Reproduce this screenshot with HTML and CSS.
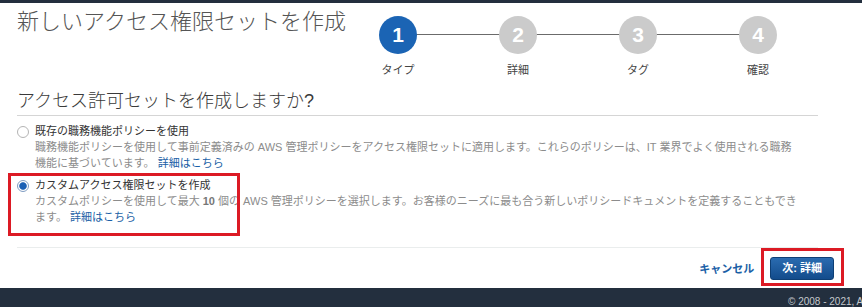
FILE: index.html
```html
<!DOCTYPE html>
<html lang="ja">
<head>
<meta charset="utf-8">
<title>新しいアクセス権限セットを作成</title>
<link rel="stylesheet" href="styles.css">
</head>
<body>
<div class="topbar"></div>
<main class="page">
  <div class="header">
    <h1 class="title">新しいアクセス権限セットを作成</h1>
    <ol class="stepper">
      <li class="step active"><span class="num">1</span><span class="step-label">タイプ</span></li>
      <li class="step"><span class="num">2</span><span class="step-label">詳細</span></li>
      <li class="step"><span class="num">3</span><span class="step-label">タグ</span></li>
      <li class="step"><span class="num">4</span><span class="step-label">確認</span></li>
    </ol>
  </div>
  <section class="question">
    <h2 class="q-title">アクセス許可セットを作成しますか?</h2>
    <div class="options">
      <div class="option">
        <span class="radio"></span>
        <div class="opt-text">
          <div class="opt-label">既存の職務機能ポリシーを使用</div>
          <div class="opt-desc">職務機能ポリシーを使用して事前定義済みの AWS 管理ポリシーをアクセス権限セットに適用します。これらのポリシーは、IT 業界でよく使用される職務<br>機能に基づいています。 <a class="link" href="#">詳細はこちら</a></div>
        </div>
      </div>
      <div class="option selected">
        <span class="radio checked"></span>
        <div class="opt-text">
          <div class="opt-label">カスタムアクセス権限セットを作成</div>
          <div class="opt-desc">カスタムポリシーを使用して最大 <b>10</b> 個の AWS 管理ポリシーを選択します。お客様のニーズに最も合う新しいポリシードキュメントを定義することもでき<br>ます。 <a class="link" href="#">詳細はこちら</a></div>
        </div>
        <span class="annot annot-option"></span>
      </div>
    </div>
  </section>
  <div class="actions">
    <a class="cancel" href="#">キャンセル</a>
    <button class="next" type="button">次: 詳細<span class="annot annot-button"></span></button>
  </div>
</main>
<footer class="footer"><span class="copy">© 2008 - 2021, Amazon Web Services, Inc. またはその関連会社。無断転用禁止。</span></footer>
</body>
</html>
```
FILE: styles.css
```css
html, body {
  margin: 0;
  padding: 0;
}
body {
  width: 862px;
  height: 307px;
  overflow: hidden;
  display: flex;
  flex-direction: column;
  background: #ffffff;
  font-family: "Liberation Sans", "Noto Sans CJK JP", sans-serif;
  color: #333333;
}
.topbar {
  height: 3px;
  background: #232f3e;
  flex: 0 0 auto;
}
.page {
  flex: 1 1 auto;
  padding: 0 28px 0 17px;
  display: flex;
  flex-direction: column;
}
.header {
  display: flex;
  align-items: flex-start;
  margin-right: 16px;
  padding-top: 6px;
}
.title {
  flex: 1 1 auto;
  min-width: 0;
  margin: 0;
  white-space: nowrap;
  font-size: 22px;
  line-height: 26px;
  font-weight: 300;
  color: #555555;
}
.stepper {
  flex: 0 0 auto;
  display: flex;
  list-style: none;
  margin: 7px 0 0 0;
  padding: 0;
}
.step {
  position: relative;
  width: 120px;
  display: flex;
  flex-direction: column;
  align-items: center;
}
.step + .step::before {
  content: "";
  position: absolute;
  top: 18px;
  left: -60px;
  width: 120px;
  height: 1px;
  background: #6b6b6b;
}
.num {
  position: relative;
  z-index: 1;
  width: 38px;
  height: 38px;
  border-radius: 50%;
  background: #cbcbcb;
  color: #ffffff;
  font-weight: bold;
  font-size: 21px;
  line-height: 38px;
  text-align: center;
}
.step.active .num {
  background: #1b64b4;
}
.step-label {
  margin-top: 9px;
  font-size: 11px;
  line-height: 14px;
  color: #444444;
}
.question {
  margin-right: 16px;
  border-bottom: 1px solid #eaeded;
}
.q-title {
  margin: 13px 0 0 0;
  padding-bottom: 3px;
  border-bottom: 1px solid #d5d5d5;
  font-size: 18px;
  line-height: 22px;
  font-weight: 300;
  color: #3a3a3a;
}
.options {
  padding: 7px 0 22px 0;
}
.option {
  position: relative;
  display: flex;
  align-items: flex-start;
  gap: 6px;
}
.option + .option {
  margin-top: 6px;
}
.radio {
  flex: 0 0 auto;
  box-sizing: border-box;
  width: 12px;
  height: 12px;
  margin-top: 3px;
  border-radius: 50%;
  border: 1px solid #b4b4b4;
  background: #ffffff;
}
.radio.checked {
  border-color: #7f9cc2;
  background: radial-gradient(circle, #1a5fb4 0, #1a5fb4 3.3px, #ffffff 4.2px);
}
.opt-text {
  font-size: 11px;
  line-height: 16px;
}
.opt-label {
  color: #333333;
}
.opt-desc {
  color: #8c8c8c;
}
.opt-desc b {
  color: #777777;
}
.link {
  color: #1b5fa6;
  text-decoration: none;
}
.annot {
  position: absolute;
  box-sizing: border-box;
  border: 3px solid #dc1a24;
  pointer-events: none;
}
.annot-option {
  left: -9px;
  top: -4px;
  width: 232px;
  height: 63px;
}
.actions {
  flex: 1 1 auto;
  display: flex;
  align-items: center;
  justify-content: flex-end;
  gap: 16px;
}
.cancel {
  font-size: 11px;
  font-weight: bold;
  color: #1b5fa6;
  text-decoration: none;
}
.next {
  position: relative;
  height: 23px;
  padding: 0 11px;
  border: 1px solid #0e3f75;
  border-radius: 3px;
  background: linear-gradient(#2a6bb0, #134c8c);
  color: #ffffff;
  font-family: "Liberation Sans", "Noto Sans CJK JP", sans-serif;
  font-size: 11px;
  font-weight: bold;
  line-height: 21px;
}
.annot-button {
  left: -10px;
  top: -10px;
  width: 83px;
  height: 38px;
}
.footer {
  flex: 0 0 19px;
  height: 19px;
  background: #232f3e;
  overflow: hidden;
  white-space: nowrap;
  padding-left: 788px;
  box-sizing: border-box;
}
.copy {
  display: block;
  padding-top: 8px;
  font-size: 10px;
  line-height: 12px;
  color: #c4c8cc;
}
```
